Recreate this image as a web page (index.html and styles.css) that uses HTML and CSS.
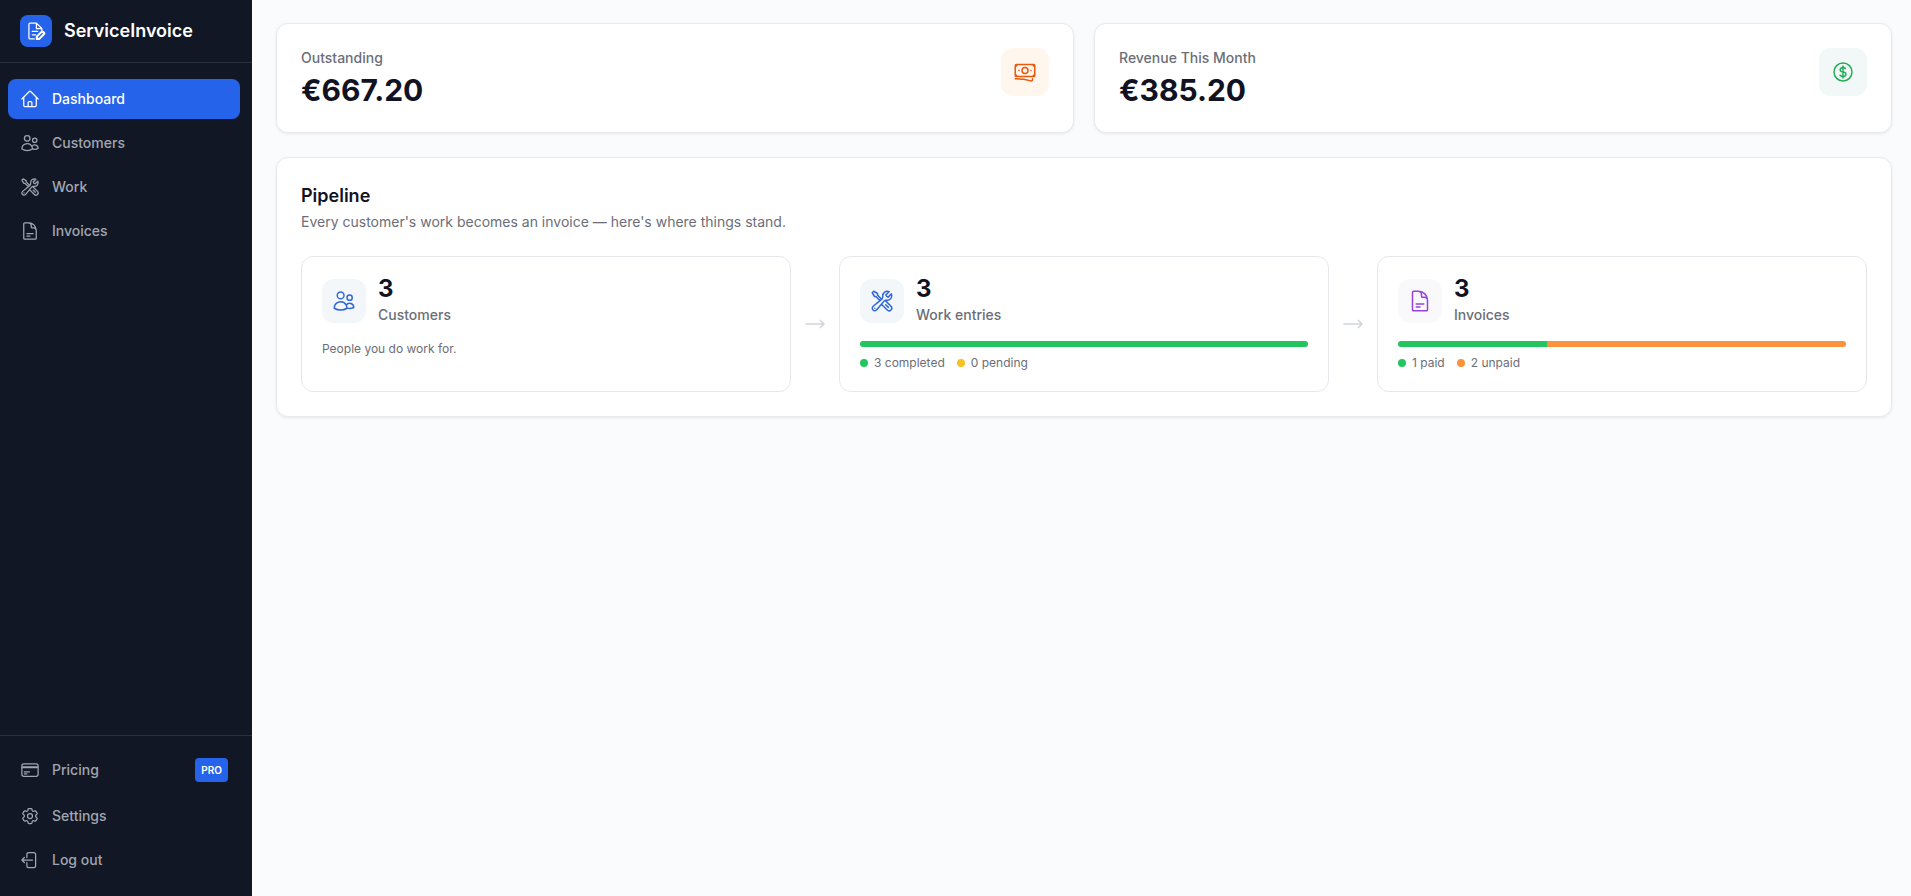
FILE: index.html
```html
<!DOCTYPE html>
<html lang="en">
<head>
    <meta charset="UTF-8">
    <meta name="viewport" content="width=device-width, initial-scale=1.0">
    <title>ServiceInvoice - Dashboard</title>
    <link rel="stylesheet" href="styles.css">
</head>
<body>
    <!-- Icons used more than once -->
    <svg class="icon-defs" aria-hidden="true">
        <symbol id="icon-users" viewBox="0 0 24 24">
            <path d="M15 19.128a9.38 9.38 0 0 0 2.625.372 9.337 9.337 0 0 0 4.121-.952 4.125 4.125 0 0 0-7.533-2.493M15 19.128v-.003c0-1.113-.285-2.16-.786-3.07M15 19.128v.106A12.318 12.318 0 0 1 8.624 21c-2.331 0-4.512-.645-6.374-1.766l-.001-.109a6.375 6.375 0 0 1 11.964-3.07M12 6.375a3.375 3.375 0 1 1-6.75 0 3.375 3.375 0 0 1 6.75 0Zm8.25 2.25a2.625 2.625 0 1 1-5.25 0 2.625 2.625 0 0 1 5.25 0Z"/>
        </symbol>
        <symbol id="icon-tools" viewBox="0 0 24 24">
            <path d="M11.42 15.17 17.25 21A2.652 2.652 0 0 0 21 17.25l-5.877-5.877M11.42 15.17l2.496-3.03c.317-.384.74-.626 1.208-.766M11.42 15.17l-4.655 5.653a2.548 2.548 0 1 1-3.586-3.586l6.837-5.63m5.108-.233c.55-.164 1.163-.188 1.743-.14a4.5 4.5 0 0 0 4.486-6.336l-3.276 3.277a3.004 3.004 0 0 1-2.25-2.25l3.276-3.276a4.5 4.5 0 0 0-6.336 4.486c.091 1.076-.071 2.264-.904 2.95l-.102.085m-1.745 1.437L5.909 7.5H4.5L2.25 3.75l1.5-1.5L7.5 4.5v1.409l4.26 4.26m-1.745 1.437 1.745-1.437m6.615 8.206L15.75 15.75M4.867 19.125h.008v.008h-.008v-.008Z"/>
        </symbol>
        <symbol id="icon-document" viewBox="0 0 24 24">
            <path d="M19.5 14.25v-2.625a3.375 3.375 0 0 0-3.375-3.375h-1.5A1.125 1.125 0 0 1 13.5 7.125v-1.5a3.375 3.375 0 0 0-3.375-3.375H8.25m0 12.75h7.5m-7.5 3H12M10.5 2.25H5.625c-.621 0-1.125.504-1.125 1.125v17.25c0 .621.504 1.125 1.125 1.125h12.75c.621 0 1.125-.504 1.125-1.125V11.25a9 9 0 0 0-9-9Z"/>
        </symbol>
        <symbol id="icon-arrow" viewBox="0 0 24 24">
            <path d="M17.25 8.25 21 12m0 0-3.75 3.75M21 12H3"/>
        </symbol>
    </svg>

    <aside class="sidebar">
        <div class="brand">
            <span class="brand-logo">
                <svg class="icon" viewBox="0 0 24 24" aria-hidden="true">
                    <path d="M10 21.5H5a1.5 1.5 0 0 1-1.5-1.5V4A1.5 1.5 0 0 1 5 2.500h7.500L19 9v2.500M12.500 2.500V9H19M7.500 12.500h6.500M7.500 16.500h4"/>
                    <path class="brand-pencil" d="M12.500 22v-3.500l6-6a1.500 1.500 0 0 1 2.200 0l1.300 1.300a1.500 1.500 0 0 1 0 2.200l-6 6Z"/>
                    <path class="brand-pencil-line" d="m15 19.500 4.500-4.500"/>
                </svg>
            </span>
            <span class="brand-name">ServiceInvoice</span>
        </div>

        <nav class="nav">
            <a href="#" class="nav-item active">
                <svg class="icon" viewBox="0 0 24 24" aria-hidden="true"><path d="m2.25 12 8.954-8.955c.44-.439 1.152-.439 1.591 0L21.75 12M4.5 9.75v10.125c0 .621.504 1.125 1.125 1.125H9.75v-4.875c0-.621.504-1.125 1.125-1.125h2.25c.621 0 1.125.504 1.125 1.125V21h4.125c.621 0 1.125-.504 1.125-1.125V9.75M8.25 21h8.25"/></svg>
                Dashboard
            </a>
            <a href="#" class="nav-item">
                <svg class="icon" aria-hidden="true"><use href="#icon-users"/></svg>
                Customers
            </a>
            <a href="#" class="nav-item">
                <svg class="icon" aria-hidden="true"><use href="#icon-tools"/></svg>
                Work
            </a>
            <a href="#" class="nav-item">
                <svg class="icon" aria-hidden="true"><use href="#icon-document"/></svg>
                Invoices
            </a>
        </nav>

        <div class="nav nav-bottom">
            <a href="#" class="nav-item">
                <svg class="icon" viewBox="0 0 24 24" aria-hidden="true"><path d="M2.25 8.25h19.5M2.25 9h19.5m-16.5 5.25h6m-6 2.25h3m-3.75 3h15a2.25 2.25 0 0 0 2.25-2.25V6.75A2.25 2.25 0 0 0 19.5 4.5h-15a2.25 2.25 0 0 0-2.25 2.25v10.5A2.25 2.25 0 0 0 4.5 19.5Z"/></svg>
                Pricing
                <span class="badge">PRO</span>
            </a>
            <a href="#" class="nav-item">
                <svg class="icon" viewBox="0 0 24 24" aria-hidden="true"><path d="M9.594 3.94c.09-.542.56-.94 1.11-.94h2.593c.55 0 1.02.398 1.11.94l.213 1.281c.063.374.313.686.645.87.074.04.147.083.22.127.325.196.72.257 1.075.124l1.217-.456a1.125 1.125 0 0 1 1.37.49l1.296 2.247a1.125 1.125 0 0 1-.26 1.431l-1.003.827c-.293.241-.438.613-.43.992a7.723 7.723 0 0 1 0 .255c-.008.378.137.75.43.991l1.004.827c.424.35.534.955.26 1.43l-1.298 2.247a1.125 1.125 0 0 1-1.369.491l-1.217-.456c-.355-.133-.75-.072-1.076.124a6.47 6.47 0 0 1-.22.128c-.331.183-.581.495-.644.869l-.213 1.281c-.09.543-.56.94-1.11.94h-2.594c-.55 0-1.019-.398-1.11-.94l-.213-1.281c-.062-.374-.312-.686-.644-.87a6.52 6.52 0 0 1-.22-.127c-.325-.196-.72-.257-1.076-.124l-1.217.456a1.125 1.125 0 0 1-1.369-.49l-1.297-2.247a1.125 1.125 0 0 1 .26-1.431l1.004-.827c.292-.24.437-.613.43-.991a6.932 6.932 0 0 1 0-.255c.007-.38-.138-.751-.43-.992l-1.004-.827a1.125 1.125 0 0 1-.26-1.43l1.297-2.247a1.125 1.125 0 0 1 1.37-.491l1.216.456c.356.133.751.072 1.076-.124.072-.044.146-.086.22-.128.332-.183.582-.495.644-.869l.214-1.28Z"/><path d="M15 12a3 3 0 1 1-6 0 3 3 0 0 1 6 0Z"/></svg>
                Settings
            </a>
            <button type="button" class="nav-item">
                <svg class="icon" viewBox="0 0 24 24" aria-hidden="true"><path d="M8.25 9V5.25A2.25 2.25 0 0 1 10.5 3h6a2.25 2.25 0 0 1 2.25 2.25v13.5A2.25 2.25 0 0 1 16.5 21h-6a2.25 2.25 0 0 1-2.25-2.25V15m-3 0-3-3m0 0 3-3m-3 3H15"/></svg>
                Log out
            </button>
        </div>
    </aside>

    <main class="content">
        <div class="stats">
            <section class="card stat">
                <div>
                    <div class="label">Outstanding</div>
                    <div class="stat-value">€667.20</div>
                </div>
                <span class="stat-icon orange">
                    <svg class="icon" viewBox="0 0 24 24" aria-hidden="true"><path d="M2.25 18.75a60.07 60.07 0 0 1 15.797 2.101c.727.198 1.453-.342 1.453-1.096V18.75M3.75 4.5v.75A.75.75 0 0 1 3 6h-.75m0 0v-.375c0-.621.504-1.125 1.125-1.125H20.25M2.25 6v9m18-10.500v.75c0 .414.336.75.75.75h.75m-1.500-1.500h.375c.621 0 1.125.504 1.125 1.125v9.75c0 .621-.504 1.125-1.125 1.125h-.375m1.500-1.500H21a.75.75 0 0 0-.75.75v.75m0 0H3.75m0 0h-.375a1.125 1.125 0 0 1-1.125-1.125V15m1.500 1.500v-.75A.75.75 0 0 0 3 15h-.75M15 10.500a3 3 0 1 1-6 0 3 3 0 0 1 6 0Zm3 0h.008v.008H18V10.500Zm-12 0h.008v.008H6V10.500Z"/></svg>
                </span>
            </section>
            <section class="card stat">
                <div>
                    <div class="label">Revenue This Month</div>
                    <div class="stat-value">€385.20</div>
                </div>
                <span class="stat-icon green">
                    <svg class="icon" viewBox="0 0 24 24" aria-hidden="true"><path d="M12 6v12m-3-2.818.879.659c1.171.879 3.07.879 4.242 0 1.172-.879 1.172-2.303 0-3.182C13.536 12.219 12.768 12 12 12c-.725 0-1.45-.22-2.003-.659-1.106-.879-1.106-2.303 0-3.182s2.9-.879 4.006 0l.415.33M21 12a9 9 0 1 1-18 0 9 9 0 0 1 18 0Z"/></svg>
                </span>
            </section>
        </div>

        <section class="card">
            <h2 class="card-title">Pipeline</h2>
            <p class="card-subtitle">Every customer's work becomes an invoice — here's where things stand.</p>

            <div class="pipeline">
                <div class="stage">
                    <div class="stage-head">
                        <span class="stage-icon blue"><svg class="icon" aria-hidden="true"><use href="#icon-users"/></svg></span>
                        <div>
                            <div class="stage-count">3</div>
                            <div class="label">Customers</div>
                        </div>
                    </div>
                    <p class="stage-note">People you do work for.</p>
                </div>

                <div class="arrow"><svg class="icon" aria-hidden="true"><use href="#icon-arrow"/></svg></div>

                <div class="stage">
                    <div class="stage-head">
                        <span class="stage-icon blue"><svg class="icon" aria-hidden="true"><use href="#icon-tools"/></svg></span>
                        <div>
                            <div class="stage-count">3</div>
                            <div class="label">Work entries</div>
                        </div>
                    </div>
                    <div class="bar">
                        <div class="bar-green" style="width: 100%"></div>
                    </div>
                    <div class="legend">
                        <span class="legend-item"><span class="dot dot-green"></span>3 completed</span>
                        <span class="legend-item"><span class="dot dot-yellow"></span>0 pending</span>
                    </div>
                </div>

                <div class="arrow"><svg class="icon" aria-hidden="true"><use href="#icon-arrow"/></svg></div>

                <div class="stage">
                    <div class="stage-head">
                        <span class="stage-icon purple"><svg class="icon" aria-hidden="true"><use href="#icon-document"/></svg></span>
                        <div>
                            <div class="stage-count">3</div>
                            <div class="label">Invoices</div>
                        </div>
                    </div>
                    <div class="bar">
                        <div class="bar-green" style="width: 33.33%"></div>
                        <div class="bar-orange" style="width: 66.67%"></div>
                    </div>
                    <div class="legend">
                        <span class="legend-item"><span class="dot dot-green"></span>1 paid</span>
                        <span class="legend-item"><span class="dot dot-orange"></span>2 unpaid</span>
                    </div>
                </div>
            </div>
        </section>
    </main>
</body>
</html>
```

FILE: styles.css
```css
* {
    box-sizing: border-box;
}

body {
    margin: 0;
    min-height: 100vh;
    display: flex;
    background-color: #fafbfd;
    color: #111322;
    font-family: Inter, "Liberation Sans", sans-serif;
    font-size: 14px;
    line-height: 20px;
}

h2, p {
    margin: 0;
}

.icon-defs {
    position: absolute;
    width: 0;
    height: 0;
}

.icon {
    width: 20px;
    height: 20px;
    flex-shrink: 0;
    fill: none;
    stroke: currentColor;
    stroke-width: 1.5;
    stroke-linecap: round;
    stroke-linejoin: round;
}

/* Sidebar */
.sidebar {
    width: 252px;
    flex-shrink: 0;
    display: flex;
    flex-direction: column;
    background-color: #111725;
}

.brand {
    display: flex;
    align-items: center;
    gap: 12px;
    padding: 15px 20px;
    border-bottom: 1px solid #2a3040;
}

.brand-logo {
    width: 32px;
    height: 32px;
    display: flex;
    align-items: center;
    justify-content: center;
    background-color: #2563eb;
    border-radius: 8px;
    color: white;
}

.brand-pencil {
    fill: white;
}

.brand-pencil-line {
    stroke: #2563eb;
}

.brand-name {
    color: white;
    font-size: 18px;
    font-weight: 600;
    line-height: 28px;
}

.nav {
    display: flex;
    flex-direction: column;
    gap: 4px;
    padding: 16px 12px 16px 8px;
}

.nav-bottom {
    margin-top: auto;
    padding-top: 12px;
    gap: 4px;
    border-top: 1px solid #2a3040;
}

.nav-item {
    display: flex;
    align-items: center;
    gap: 12px;
    padding: 10px 12px;
    border: none;
    border-radius: 8px;
    background: none;
    color: #a1a6b1;
    font: inherit;
    font-weight: 500;
    text-align: left;
    text-decoration: none;
    cursor: pointer;
}

.nav-item.active {
    background-color: #2563eb;
    color: white;
}

.badge {
    margin-left: auto;
    padding: 4px 6px;
    background-color: #2563eb;
    border-radius: 4px;
    color: white;
    font-size: 10px;
    font-weight: 600;
    line-height: 16px;
}

/* Main content */
.content {
    flex: 1;
    min-width: 0;
    padding: 23px 19px 24px 24px;
}

.card {
    padding: 24px;
    background-color: white;
    border: 1px solid #e9eaee;
    border-radius: 12px;
    box-shadow: 0 1px 3px rgba(0, 0, 0, 0.08);
}

.stats {
    display: grid;
    grid-template-columns: 1fr 1fr;
    gap: 20px;
    margin-bottom: 24px;
}

.stat {
    display: flex;
    align-items: flex-start;
    justify-content: space-between;
}

.label {
    color: #6b6e78;
    font-weight: 500;
}

.stat-value {
    margin-top: 4px;
    font-size: 30px;
    font-weight: 700;
    line-height: 36px;
}

.stat-icon {
    width: 48px;
    height: 48px;
    display: flex;
    align-items: center;
    justify-content: center;
    border-radius: 12px;
}

.stat-icon .icon {
    width: 24px;
    height: 24px;
}

.orange {
    background-color: #fff7ed;
    color: #ea580c;
}

.green {
    background-color: #f2f7f8;
    color: #22ae58;
}

.blue {
    background-color: #f3f7f9;
    color: #2f66dc;
}

.purple {
    background-color: #f9f9fb;
    color: #9544d8;
}

.card-title {
    font-size: 18px;
    font-weight: 600;
    line-height: 28px;
}

.card-subtitle {
    margin-top: 2px;
    color: #6b6e78;
}

/* Pipeline */
.pipeline {
    display: flex;
    margin-top: 24px;
}

.stage {
    flex: 1;
    padding: 20px;
    border: 1px solid #e5e7eb;
    border-radius: 12px;
}

.stage-head {
    display: flex;
    align-items: center;
    gap: 12px;
    margin-bottom: 16px;
}

.stage-icon {
    width: 44px;
    height: 44px;
    display: flex;
    align-items: center;
    justify-content: center;
    border-radius: 12px;
}

.stage-icon .icon {
    width: 24px;
    height: 24px;
}

.stage-count {
    margin-bottom: 4px;
    font-size: 24px;
    font-weight: 700;
    line-height: 24px;
}

.stage-note {
    color: #6b6e78;
    font-size: 12px;
    line-height: 16px;
}

.arrow {
    width: 48px;
    display: flex;
    align-items: center;
    justify-content: center;
    color: #d1d5db;
}

.arrow .icon {
    width: 24px;
    height: 24px;
}

.bar {
    display: flex;
    height: 6px;
    margin-bottom: 8px;
    border-radius: 3px;
    overflow: hidden;
    background-color: #f3f4f6;
}

.bar-green, .dot-green {
    background-color: #22c55e;
}

.bar-orange, .dot-orange {
    background-color: #fb923c;
}

.dot-yellow {
    background-color: #fbbf24;
}

.legend {
    display: flex;
    flex-wrap: wrap;
    gap: 12px;
    color: #6b6e78;
    font-size: 12px;
    line-height: 16px;
}

.legend-item {
    display: flex;
    align-items: center;
    gap: 6px;
}

.dot {
    width: 8px;
    height: 8px;
    border-radius: 50%;
}

@media (max-width: 900px) {
    .stats {
        grid-template-columns: 1fr;
    }

    .pipeline {
        flex-direction: column;
    }

    .arrow {
        width: auto;
        padding: 12px 0;
    }
}
```
